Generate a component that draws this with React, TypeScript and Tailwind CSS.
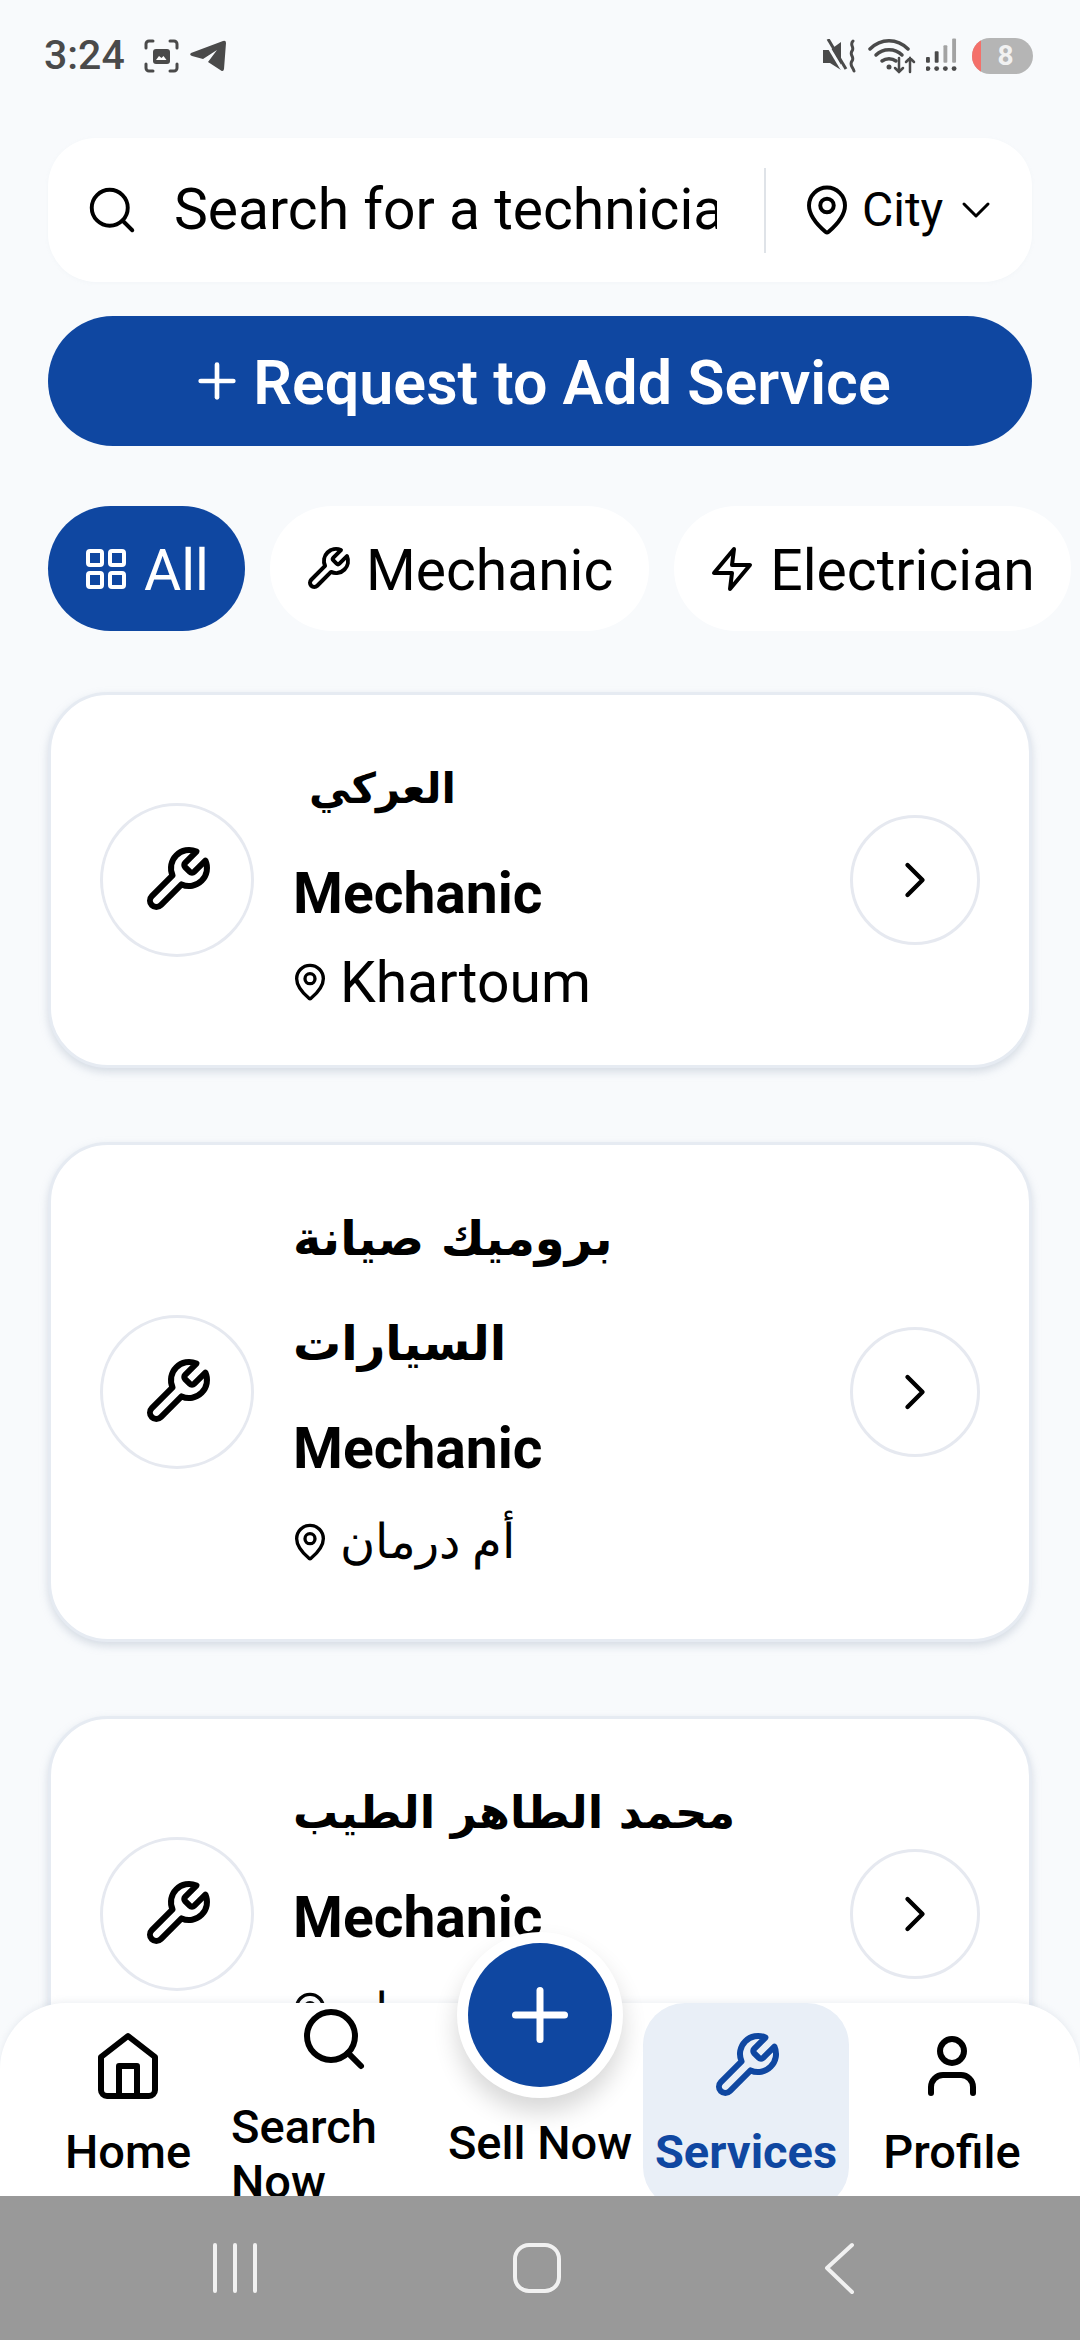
import { ChevronDown, ChevronRight, LayoutGrid, MapPin, Plus, Search, User } from "lucide-react";

const technicians = [
  { id: 1, name: "العركي", nameClass: "pl-[16px] text-[42px]", city: "Khartoum", arabicCity: false },
  { id: 2, name: "بروميك صيانة السيارات", nameClass: "text-[48px]", city: "أم درمان", arabicCity: true },
  { id: 3, name: "محمد الطاهر الطيب", nameClass: "text-[45px]", city: "أم درمان", arabicCity: true },
];

function WrenchIcon({ size, strokeWidth = 2 }: { size: number; strokeWidth?: number }) {
  return (
    <svg width={size} height={size} viewBox="0 0 24 24" fill="none" stroke="currentColor" strokeWidth={strokeWidth} strokeLinecap="round" strokeLinejoin="round" className="shrink-0">
      <path d="M14.7 6.3a1 1 0 0 0 0 1.4l1.6 1.6a1 1 0 0 0 1.4 0l3.77-3.77a6 6 0 0 1-7.94 7.94l-6.91 6.91a2.12 2.12 0 0 1-3-3l6.91-6.91a6 6 0 0 1 7.94-7.94l-3.76 3.76z" />
    </svg>
  );
}

function ZapIcon({ size }: { size: number }) {
  return (
    <svg width={size} height={size} viewBox="0 0 24 24" fill="none" stroke="currentColor" strokeWidth={2} strokeLinecap="round" strokeLinejoin="round" className="shrink-0">
      <path d="M13 2 3 14h9l-1 8 10-12h-9l1-8z" />
    </svg>
  );
}

function HomeIcon({ size }: { size: number }) {
  return (
    <svg width={size} height={size} viewBox="0 0 24 24" fill="none" stroke="currentColor" strokeWidth={2} strokeLinecap="round" strokeLinejoin="round">
      <path d="m3 9 9-7 9 7v11a2 2 0 0 1-2 2H5a2 2 0 0 1-2-2z" />
      <path d="M9 22V12h6v10" />
    </svg>
  );
}

function StatusBar() {
  return (
    <div className="h-[138px] shrink-0 flex items-start justify-between pl-[44px] pr-[47px] pt-[37px] text-[#4a4a4a]">
      <div className="flex items-center h-[37px]">
        <span className="w-[100px] text-[41px] font-medium leading-none">3:24</span>
        <svg width="35" height="34" viewBox="0 0 35 34" fill="none" stroke="#4a4a4a" strokeWidth="3" strokeLinecap="round">
          <path d="M2 9V5a3 3 0 0 1 3-3h4M26 2h4a3 3 0 0 1 3 3v4M33 25v4a3 3 0 0 1-3 3h-4M9 32H5a3 3 0 0 1-3-3v-4" />
          <rect x="9" y="10" width="17" height="15" rx="3" fill="#4a4a4a" stroke="none" />
          <path d="M12 21l3-4 2.500 2 2-2 3 4z" fill="#fff" stroke="none" />
        </svg>
        <svg width="37" height="32" viewBox="0 0 37 32" fill="#4a4a4a" className="ml-[11px]">
          <path d="M1 13 33 1q3-1 3 2l-2 26q-.5 3-3 1.500L18 22l9-12-14 9-11-3q-3-1-1-3z" />
        </svg>
      </div>
      <div className="flex items-center h-[37px]">
        <svg width="34" height="34" viewBox="0 0 34 34" fill="#4a4a4a">
          <path d="M0 11h7l11-8v28L7 24H0z" />
          <path d="M2 2l18 30" stroke="#f8fafc" strokeWidth="3" />
          <path d="M5 0l18 30" stroke="#4a4a4a" strokeWidth="3" />
          <path d="M30 2c-4 4 2 6-1 10s3 6 0 10 1 6 2 10" fill="none" stroke="#4a4a4a" strokeWidth="3" strokeLinecap="round" />
        </svg>
        <svg width="48" height="36" viewBox="0 0 48 36" fill="none" stroke="#4a4a4a" strokeLinecap="round" className="ml-[11px]">
          <path d="M2 11c11-11 27-11 38 0" strokeWidth="3.500" />
          <path d="M8 17c7-7 19-7 26 0" strokeWidth="3.500" />
          <path d="M14 23c4-3 10-3 14 0" strokeWidth="3.500" />
          <circle cx="21" cy="29" r="2.500" fill="#4a4a4a" stroke="none" />
          <path d="M31 20v14m-4-4 4 4 4-4M42 34V20m-4 4 4-4 4 4" strokeWidth="2.500" />
        </svg>
        <svg width="31" height="35" viewBox="0 0 32 35" fill="#4a4a4a" className="ml-[10px]">
          <rect x="0" y="19" width="4" height="6" rx="1" />
          <rect x="9" y="13" width="4" height="12" rx="1" />
          <rect x="18" y="7" width="4" height="18" rx="1" fill="#a3a3a3" />
          <rect x="27" y="0" width="4" height="25" rx="1" fill="#a3a3a3" />
          <circle cx="2" cy="31" r="2.500" />
          <circle cx="11" cy="31" r="2.500" />
          <circle cx="20" cy="31" r="2.500" />
          <circle cx="29" cy="31" r="2.500" />
        </svg>
        <div className="ml-[15px] w-[61px] h-[36px] rounded-full bg-[#b5b5b5] overflow-hidden flex items-center relative">
          <div className="absolute left-0 top-0 bottom-0 w-[9px] bg-[#f4706a]" />
          <span className="flex-1 text-center pl-[6px] text-[28px] font-bold leading-none text-[#f1f1f1]">8</span>
        </div>
      </div>
    </div>
  );
}

function SearchBar() {
  return (
    <div className="h-[144px] rounded-[48px] bg-white flex items-center pl-[37px] shadow-[0_1px_4px_rgba(148,163,184,0.06)]">
      <Search size={54} strokeWidth={1.75} className="shrink-0 text-black" />
      <div className="ml-[35px] w-[543px] shrink-0 overflow-hidden whitespace-nowrap text-[57px] leading-[70px] text-black">Search for a technician</div>
      <div className="ml-[47px] w-[2px] h-[85px] shrink-0 bg-[#dfe3e8]" />
      <MapPin size={54} strokeWidth={1.75} className="ml-[34px] shrink-0 text-black" />
      <span className="ml-[8px] text-[48px] leading-none text-black">City</span>
      <ChevronDown size={48} strokeWidth={1.5} className="ml-[9px] shrink-0 text-black" />
    </div>
  );
}

function Chip({ active, icon, label }: { active?: boolean; icon: React.ReactNode; label: string }) {
  return (
    <div className={`h-[125px] shrink-0 rounded-full flex items-center gap-[14px] pl-[34px] pr-[36px] text-[57px] leading-none ${active ? "bg-[#0f47a1] text-white" : "bg-white text-black"}`}>
      {icon}
      <span className="mt-[4px]">{label}</span>
    </div>
  );
}

function TechnicianCard({ name, nameClass, city, arabicCity }: { name: string; nameClass: string; city: string; arabicCity: boolean }) {
  return (
    <div className="rounded-[60px] bg-white border-[3px] border-[#e6ebf2] shadow-[0_4px_8px_rgba(148,163,184,0.35)] flex items-center px-[49px]">
      <div className="w-[154px] h-[154px] shrink-0 rounded-full border-[3px] border-[#e6e9f0] flex items-center justify-center text-black">
        <WrenchIcon size={72} />
      </div>
      <div className="ml-[39px] flex-1 min-w-0 pr-[90px] pt-[41px] pb-[48px]">
        <div className={`leading-[105px] font-bold text-black [font-family:'DejaVu_Sans',sans-serif] ${nameClass}`}>{name}</div>
        <div className="text-[57px] leading-[106px] font-bold text-black">Mechanic</div>
        <div className={`flex items-center gap-[10px] leading-none text-black ${arabicCity ? "h-[89px] pb-[10px] text-[48px]" : "h-[70px] text-[57px]"}`}>
          <MapPin size={40} strokeWidth={2} className="shrink-0 -ml-[3px]" />
          <span>{city}</span>
        </div>
      </div>
      <div className="w-[130px] h-[130px] shrink-0 rounded-full border-[3px] border-[#e6e9f0] flex items-center justify-center">
        <ChevronRight size={60} strokeWidth={1.75} className="text-black" />
      </div>
    </div>
  );
}

function NavItem({ icon, label, active }: { icon: React.ReactNode; label: string; active?: boolean }) {
  return (
    <div className={`flex flex-col items-center pt-[27px] h-full rounded-[42px] ${active ? "bg-[#e9eff7] text-[#0f47a1]" : "text-black"}`}>
      {icon}
      <div className={`mt-[22px] text-[47px] leading-[56px] whitespace-nowrap ${active ? "font-bold" : "font-medium"}`}>{label}</div>
    </div>
  );
}

function BottomNav() {
  return (
    <div className="absolute inset-x-0 bottom-0">
      <div className="h-[193px] bg-white rounded-t-[66px] relative grid grid-cols-5 px-[25px] shadow-[0_-2px_6px_rgba(148,163,184,0.15)]">
        <NavItem icon={<HomeIcon size={72} />} label="Home" />
        <div className="flex flex-col items-center text-black">
          <Search size={72} strokeWidth={2} className="shrink-0" />
          <div className="mt-[24px] w-full text-left text-[47px] leading-[55px] font-medium">
            Search
            <br />
            Now
          </div>
        </div>
        <div className="flex flex-col items-center">
          <div className="mt-[112px] text-[47px] leading-[56px] font-medium text-black whitespace-nowrap">Sell Now</div>
        </div>
        <NavItem icon={<WrenchIcon size={72} />} label="Services" active />
        <NavItem icon={<User size={72} strokeWidth={2} className="shrink-0" />} label="Profile" />
        <div className="absolute left-[457px] -top-[71px] w-[166px] h-[166px] rounded-full bg-white flex items-center justify-center shadow-[0_14px_24px_rgba(0,0,0,0.16)]">
          <div className="w-[144px] h-[144px] rounded-full bg-[#0f47a1] flex items-center justify-center">
            <Plus size={84} strokeWidth={2} className="text-white" />
          </div>
        </div>
      </div>
      <div className="h-[144px] bg-[#999999] relative">
        <svg width="1080" height="144" viewBox="0 0 1080 144" fill="none" stroke="#f1f1f1" strokeWidth="4" strokeLinecap="round" strokeLinejoin="round">
          <path d="M215 49v46M235 49v46M255 49v46" />
          <rect x="515" y="49" width="44" height="46" rx="14" />
          <path d="M852 49 827 72l25 24" />
        </svg>
      </div>
    </div>
  );
}

export default function App() {
  return (
    <div className="relative w-[1080px] h-[2340px] overflow-hidden bg-[#f8fafc] [font-family:Roboto,sans-serif]">
      <StatusBar />
      <main className="px-[48px]">
        <SearchBar />
        <button className="mt-[34px] w-full h-[130px] rounded-full bg-[#0f47a1] text-white flex items-center justify-center gap-[8px] text-[61px] font-semibold leading-none">
          <Plus size={56} strokeWidth={2} />
          <span className="mt-[4px]">Request to Add Service</span>
        </button>
        <div className="mt-[60px] flex gap-[25px]">
          <Chip active icon={<LayoutGrid size={48} strokeWidth={2} />} label="All" />
          <Chip icon={<WrenchIcon size={48} />} label="Mechanic" />
          <Chip icon={<ZapIcon size={48} />} label="Electrician" />
        </div>
        <div className="mt-[61px] flex flex-col gap-[74px]">
          {technicians.map((t) => (
            <TechnicianCard key={t.id} name={t.name} nameClass={t.nameClass} city={t.city} arabicCity={t.arabicCity} />
          ))}
        </div>
      </main>
      <BottomNav />
    </div>
  );
}
